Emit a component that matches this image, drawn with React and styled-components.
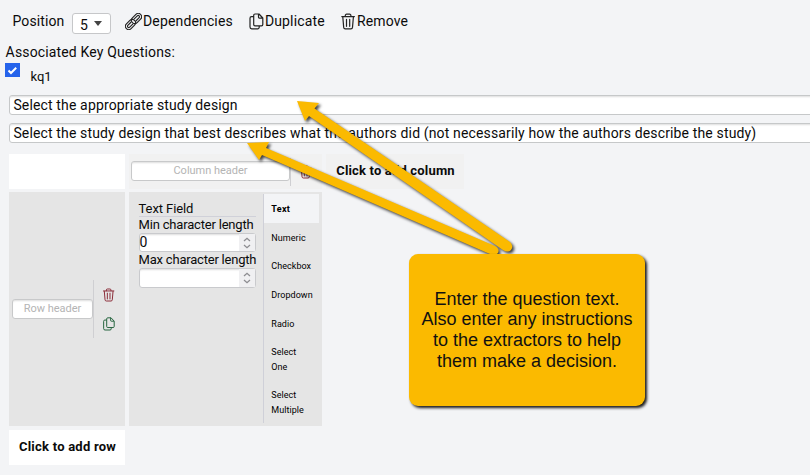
import React from "react";
import styled, { createGlobalStyle } from "styled-components";

const Global = createGlobalStyle`
  *, *::before, *::after { box-sizing: border-box; }
  body { margin: 0; background: #f3f4f6; overflow: hidden; }
`;

const Page = styled.main`
  position: relative;
  width: 810px;
  height: 475px;
  overflow: hidden;
  background: #f3f4f6;
  color: #0b0b0b;
  font: 14px/20px Roboto, sans-serif;
`;

const Toolbar = styled.header`
  display: flex;
  align-items: center;
  height: 42px;
  padding-left: 12.5px;
  letter-spacing: 0.1px;
`;

const PositionLabel = styled.span`
  width: 59.5px;
`;

const PositionSelect = styled.div`
  display: flex;
  align-items: center;
  justify-content: space-between;
  width: 39px;
  height: 21px;
  margin: 4px 14px 0 0;
  padding: 4px 8px 0 7px;
  border: 1px solid #c6c7c9;
  border-radius: 3px;
  background: #fff;
`;

const Caret = styled.span`
  margin-top: -4px;
  border: 4px solid transparent;
  border-top: 5px solid #444;
  border-bottom: 0;
`;

const Action = styled.div`
  display: flex;
  align-items: center;
  width: ${(p) => p.$width}px;
  letter-spacing: 0.15px;
  white-space: nowrap;

  svg { flex: none; margin: 1px ${(p) => p.$gap}px 0 0; }
`;

const KeyQuestions = styled.section`
  height: 53px;
  padding-left: 5px;
`;

const SectionLabel = styled.div`
  height: 21px;
  padding-left: 0.6px;
  letter-spacing: 0.15px;
`;

const CheckRow = styled.label`
  display: flex;
  gap: 10.5px;
  font-size: 13px;
`;

const Check = styled.span`
  display: grid;
  place-items: center;
  width: 15px;
  height: 14px;
  background: #2563eb;
`;

const CheckLabel = styled.span`
  margin-top: 4px;
`;

const QuestionInput = styled.div`
  height: 20px;
  margin: 0 -4px 8px 9px;
  padding: 0 3.4px;
  border: 1px solid #c6c8c9;
  border-radius: 3px;
  background: #fff;
  box-shadow: inset 0 2px 2px -1px #ddd;
  line-height: 19px;
  letter-spacing: 0.145px;
  white-space: nowrap;
`;

const Matrix = styled.section`
  display: grid;
  grid-template-columns: 116px 193px 138px;
  grid-template-rows: 35px 234px 35px;
  column-gap: 4px;
  row-gap: 3px;
  margin: 11px 0 0 9px;
`;

const Blank = styled.div`
  background: #fff;
`;

const ColumnHead = styled.div`
  display: flex;
  align-items: center;
  padding-left: 2px;
  background: #f1f1f1;
`;

const HeaderInput = styled.div`
  width: ${(p) => p.$width}px;
  height: 20px;
  margin-top: -1px;
  border: 1px solid #c8c9ca;
  border-radius: 3px;
  background: #fff;
  box-shadow: inset 0 2px 2px -1px #ddd;
  color: #b4b4b4;
  font-size: 11px;
  line-height: 17px;
  letter-spacing: -0.02px;
  text-align: center;
`;

const HeadTools = styled.div`
  display: flex;
  align-items: center;
  height: 28px;
  padding-left: 8px;
  border-left: 1px solid #cfcfd2;
`;

const AddButton = styled.div`
  display: flex;
  align-items: center;
  justify-content: center;
  height: 35px;
  margin-top: ${(p) => p.$top}px;
  padding: 0 0 2px 1px;
  background: ${(p) => p.$bg};
  font-size: 13px;
  font-weight: 700;
  letter-spacing: ${(p) => p.$spacing}px;
  white-space: nowrap;
`;

const RowHead = styled.div`
  display: flex;
  align-items: center;
  padding-left: 3px;
  background: #e5e5e5;
`;

const RowTools = styled.div`
  display: flex;
  flex-direction: column;
  justify-content: center;
  gap: 15px;
  height: 58px;
  padding: 1px 0 0 7.5px;
  border-left: 1px solid #cfcfd2;
`;

const Cell = styled.div`
  display: flex;
  justify-content: space-between;
  padding: 2px 3px 3px 9.6px;
  background: #e5e5e5;
`;

const Fields = styled.div`
  width: 117px;
  padding-top: 6px;
  font-size: 13px;
  line-height: 17px;
  white-space: nowrap;
`;

const FieldTitle = styled.div`
  height: 17px;
  border-bottom: 1px solid #d0d1d9;
  letter-spacing: -0.1px;
`;

const FieldLabel = styled.div`
  height: 16px;
  line-height: 15px;
  letter-spacing: ${(p) => p.$spacing}px;
`;

const NumberInput = styled.div`
  display: flex;
  justify-content: space-between;
  height: ${(p) => p.$height}px;
  border: 1px solid #c9cacd;
  border-radius: 3px;
  background: #fff;
  box-shadow: inset 0 2px 2px -1px #ddd;
  font-size: 14px;
  line-height: 17px;
`;

const Stepper = styled.span`
  display: grid;
  place-items: center;
  width: 16px;
  background: #f0f0f2;
`;

const Tabs = styled.nav`
  width: 56px;
  border-left: 1px solid #cfd0d8;
`;

const Tab = styled.div`
  padding: ${(p) => (p.$active ? 8 : 7)}px 7.3px 0;
  height: ${(p) => p.$height}px;
  color: #000;
  font-size: 9px;
  font-weight: ${(p) => (p.$active ? 700 : 400)};
  line-height: 15px;
  letter-spacing: ${(p) => (p.$active ? 0.3 : 0.05)}px;
  background: linear-gradient(${(p) => (p.$active ? "#f3f4f6, #f3f4f6" : "transparent, transparent")}) 0 0 / 100% 29px no-repeat;
`;

const Arrows = styled.svg`
  position: absolute;
  inset: 0;
  pointer-events: none;
  filter: drop-shadow(2px 2px 1.5px rgba(0, 0, 0, 0.75));
`;

const Callout = styled.aside`
  position: absolute;
  left: 409px;
  top: 254px;
  display: flex;
  align-items: center;
  justify-content: center;
  width: 236px;
  height: 152px;
  border-radius: 9px;
  background: #fbba00;
  box-shadow: 2px 2px 3px rgba(0, 0, 0, 0.9);
  color: #111;
  font: 18px/20.7px "Liberation Sans", Arial, sans-serif;
  text-align: center;
  white-space: nowrap;
`;

const tabs = [
  ["Text", 30],
  ["Numeric", 28],
  ["Checkbox", 29],
  ["Dropdown", 29],
  ["Radio", 28],
  ["Select One", 43],
  ["Select Multiple", 43],
];

function LinkIcon() {
  return (
    <svg width="17" height="17" viewBox="0 0 17 17" fill="none" stroke="#222" strokeWidth="1.15">
      <g transform="rotate(-45 8.5 8.5)">
        <rect x="7" y="5.200" width="11.500" height="6.600" rx="3.300" />
        <path d="M10.500 7.200h4.700a1.300 1.300 0 0 1 0 2.600h-4.700" />
        <rect x="-1.500" y="5.200" width="11.500" height="6.600" rx="3.300" />
        <path d="M6.500 9.800H1.800a1.300 1.300 0 0 1 0-2.600h4.700" />
      </g>
    </svg>
  );
}

function DuplicateIcon({ size = 17, color = "#222" }) {
  return (
    <svg width={size} height={size} viewBox="0 0 16 17" fill="none" stroke={color} strokeWidth="1.2" strokeLinejoin="round">
      <path d="M6.500 1h4L14.300 5v6.500a1.300 1.300 0 0 1-1.300 1.300H6.500a1.300 1.300 0 0 1-1.300-1.300V2.300A1.300 1.300 0 0 1 6.500 1ZM10 1v3.300a.8.8 0 0 0 .8.8H14M5 3.700H3a1.500 1.500 0 0 0-1.500 1.500v8.900A1.700 1.700 0 0 0 3.200 15.800h6a1.500 1.500 0 0 0 1.500-1.500v-1.300" />
    </svg>
  );
}

function TrashIcon({ size = 17, color = "#222" }) {
  return (
    <svg width={size} height={size} viewBox="0 0 16 17" fill="none" stroke={color} strokeWidth="1.2" strokeLinejoin="round" strokeLinecap="round">
      <path d="M1.300 3.600h12.600M4.800 3.400V2.500A1.300 1.300 0 0 1 6.100 1.200h3a1.300 1.300 0 0 1 1.300 1.300v.9M2.300 4l.9 10.400a1.600 1.600 0 0 0 1.600 1.400h5.600a1.600 1.600 0 0 0 1.600-1.400L12.900 4M6 6.300v7M9.200 6.300v7" />
    </svg>
  );
}

function Spin() {
  return (
    <Stepper>
      <svg width="8" height="12" viewBox="0 0 8 12" fill="none" stroke="#8d8d91" strokeWidth="1.3">
        <path d="M1 4 4 1.3 7 4M1 8l3 2.7L7 8" />
      </svg>
    </Stepper>
  );
}

export default function App() {
  return (
    <Page>
      <Global />
      <Toolbar>
        <PositionLabel>Position</PositionLabel>
        <PositionSelect>5<Caret /></PositionSelect>
        <Action $width={122.5} $gap={1}><LinkIcon />Dependencies</Action>
        <Action $width={92} $gap={0.4}><DuplicateIcon />Duplicate</Action>
        <Action $width={80} $gap={0.4}><TrashIcon />Remove</Action>
      </Toolbar>
      <KeyQuestions>
        <SectionLabel>Associated Key Questions:</SectionLabel>
        <CheckRow>
          <Check>
            <svg width="11" height="9" viewBox="0 0 11 9" fill="none" stroke="#fff" strokeWidth="2">
              <path d="M1.5 4.5 4 7 9.2 1.8" />
            </svg>
          </Check>
          <CheckLabel>kq1</CheckLabel>
        </CheckRow>
      </KeyQuestions>
      <QuestionInput>Select the appropriate study design</QuestionInput>
      <QuestionInput>
        Select the study design that best describes what the authors did (not necessarily how the authors describe the study)
      </QuestionInput>
      <Matrix>
        <Blank />
        <ColumnHead>
          <HeaderInput $width={159}>Column header</HeaderInput>
          <HeadTools><TrashIcon size={14} color="#8b2c38" /></HeadTools>
        </ColumnHead>
        <AddButton $bg="#f1f1f1" $top={0} $spacing={0.17}>Click to add column</AddButton>
        <RowHead>
          <HeaderInput $width={81}>Row header</HeaderInput>
          <RowTools>
            <TrashIcon size={14} color="#8b2c38" />
            <DuplicateIcon size={14} color="#23633c" />
          </RowTools>
        </RowHead>
        <Cell>
          <Fields>
            <FieldTitle>Text Field</FieldTitle>
            <FieldLabel $spacing={-0.19}>Min character length</FieldLabel>
            <NumberInput $height={19}>0<Spin /></NumberInput>
            <FieldLabel $spacing={-0.21}>Max character length</FieldLabel>
            <NumberInput $height={20}><span /><Spin /></NumberInput>
          </Fields>
          <Tabs>
            {tabs.map(([name, height], i) => (
              <Tab key={name} $height={height} $active={i === 0}>{name}</Tab>
            ))}
          </Tabs>
        </Cell>
        <span />
        <AddButton $bg="#fff" $top={1} $spacing={0.23}>Click to add row</AddButton>
      </Matrix>
      <Arrows width="810" height="475" viewBox="0 0 810 475" fill="#fbba00">
        <path d="M297 101 319 103 314.500 108.500 510 242Q514 246 511 250 508 253 503 250L309 116 305 121Z" />
        <path d="M247 143 269 142 266 148 495 246Q500 249 498 253 496 256 490 254L262 155 259 160Z" />
      </Arrows>
      <Callout>
        Enter the question text.<br />Also enter any instructions<br />to the extractors to help<br />them make a decision.
      </Callout>
    </Page>
  );
}
